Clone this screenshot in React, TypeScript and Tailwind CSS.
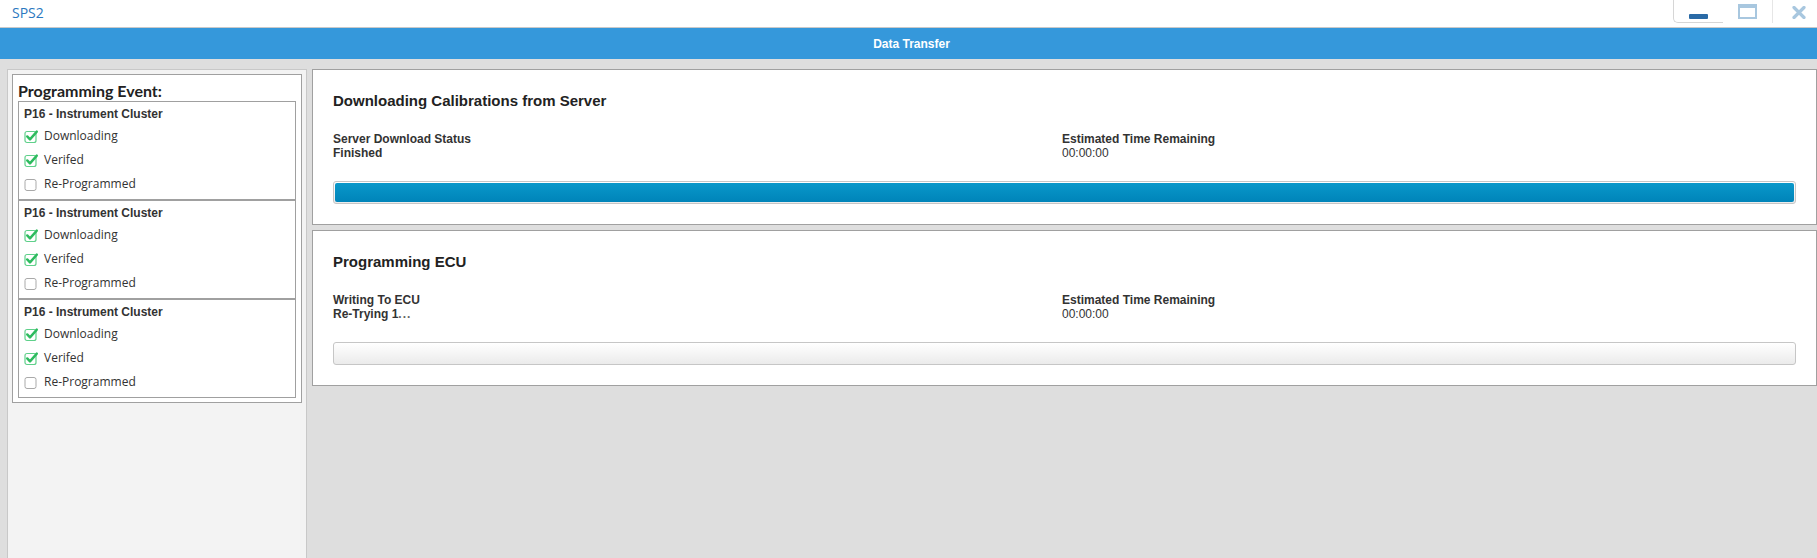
import React from "react";

const events = [1, 2, 3];

const CheckedBox = () => (
  <svg width="15" height="15" viewBox="0 0 15 15" className="shrink-0">
    <rect x="1" y="2.5" width="11" height="11" rx="2" fill="white" stroke="#5fd08a" strokeWidth="1.2" />
    <path d="M3.2 7.4 L6 10.4 L12.8 2.6" fill="none" stroke="#2dbb5e" strokeWidth="2.4" strokeLinecap="round" strokeLinejoin="round" />
  </svg>
);

const EmptyBox = () => (
  <svg width="15" height="15" viewBox="0 0 15 15" className="shrink-0">
    <rect x="1" y="2.5" width="11" height="11" rx="2" fill="white" stroke="#a9a9a9" strokeWidth="1" />
  </svg>
);

type StepProps = {
  done: boolean;
  label: string;
};

const Step = ({ done, label }: StepProps) => (
  <div className="flex h-[24px] items-center gap-[5px] pl-[5px] font-['Open_Sans',sans-serif] text-[12px] text-[#333]">
    {done ? <CheckedBox /> : <EmptyBox />}
    <span>{label}</span>
  </div>
);

const EventCard = () => (
  <div className="h-[99px] border border-[#a0a0a0] bg-white pt-[4px]">
    <div className="h-[16px] pl-[5px] text-[12px] leading-[16px] font-bold text-[#333]">
      P16 - Instrument Cluster
    </div>
    <div className="mt-[2px]">
      <Step done label="Downloading" />
      <Step done label="Verifed" />
      <Step done={false} label="Re-Programmed" />
    </div>
  </div>
);

type PanelProps = {
  title: string;
  status: string;
  value: React.ReactNode;
  progress: number;
};

const TransferPanel = ({ title, status, value, progress }: PanelProps) => (
  <div className="h-[156px] border border-[#a0a0a0] bg-white px-[20px] pt-[22px]">
    <h2 className="text-[15px] leading-[18px] font-bold text-[#222]">{title}</h2>
    <div className="mt-[22px] grid grid-cols-[729px_1fr] text-[12px] leading-[14px] text-[#333]">
      <div>
        <div className="font-bold">{status}</div>
        <div className="font-bold">{value}</div>
      </div>
      <div>
        <div className="font-bold">Estimated Time Remaining</div>
        <div>00:00:00</div>
      </div>
    </div>
    <div className="mt-[21px] h-[23px] rounded-[3px] border border-[#c6c6c6] bg-linear-to-b from-white to-[#ebebeb] p-[1px]">
      {progress > 0 && (
        <div
          className="h-full rounded-[2px] bg-linear-to-b from-[#0a98ca] to-[#0084b9]"
          style={{ width: `${progress}%` }}
        />
      )}
    </div>
  </div>
);

export default function App() {
  return (
    <div className="flex h-[558px] w-full flex-col overflow-hidden bg-[#dedede] font-['Liberation_Sans',Arial,sans-serif]">
      {/* window title bar */}
      <div className="flex h-[28px] shrink-0 items-start justify-between border-b border-[#c9c9c9] bg-white">
        <div className="pl-[12px] pt-[3px] font-['Open_Sans',sans-serif] text-[14px] leading-[20px] text-[#2b78c0]">
          SPS2
        </div>
        <div className="flex">
          <div className="flex h-[23px] w-[50px] items-end justify-center rounded-bl-[5px] border-b border-l border-[#d6d6d6] pb-[3px]">
            <div className="h-[5px] w-[19px] rounded-[1px] bg-[#2a6aa6]" />
          </div>
          <div className="flex h-[23px] w-[50px] items-start justify-center border-r border-[#e6e6e6] pt-[4px]">
            <div className="h-[15px] w-[19px] border-[2px] border-t-[4px] border-[#a8c7df]" />
          </div>
          <div className="flex h-[23px] w-[44px] items-start justify-center pl-[8px] pt-[6px]">
            <svg width="14" height="13" viewBox="0 0 14 13">
              <path d="M2 1.5 L12 11.5 M12 1.5 L2 11.5" stroke="#a8c7df" strokeWidth="3.2" strokeLinecap="round" />
            </svg>
          </div>
        </div>
      </div>

      {/* blue header */}
      <div className="flex h-[31px] shrink-0 items-center justify-center bg-[#3598db] pl-[6px] text-[12px] font-bold text-white">
        Data Transfer
      </div>

      <div className="flex min-h-0 flex-1 pt-[10px]">
        {/* sidebar */}
        <aside className="ml-[7px] w-[300px] shrink-0 border-x border-t border-[#c8c8c8] bg-[#f3f3f3] px-[4px] pt-[4px]">
          <div className="border border-[#a0a0a0] bg-white px-[5px] pb-[4px]">
            <div className="h-[26px] pt-[6px] font-['Lato',sans-serif] text-[16px] leading-[20px] font-bold text-[#222]">
              Programming Event:
            </div>
            {events.map((e) => (
              <EventCard key={e} />
            ))}
          </div>
        </aside>

        {/* main */}
        <main className="ml-[5px] flex flex-1 flex-col gap-[5px]">
          <TransferPanel
            title="Downloading Calibrations from Server"
            status="Server Download Status"
            value="Finished"
            progress={100}
          />
          <TransferPanel
            title="Programming ECU"
            status="Writing To ECU"
            value={
              <>
                Re-Trying 1<span className="tracking-[1px] text-[#666]">...</span>
              </>
            }
            progress={0}
          />
        </main>
      </div>
    </div>
  );
}
